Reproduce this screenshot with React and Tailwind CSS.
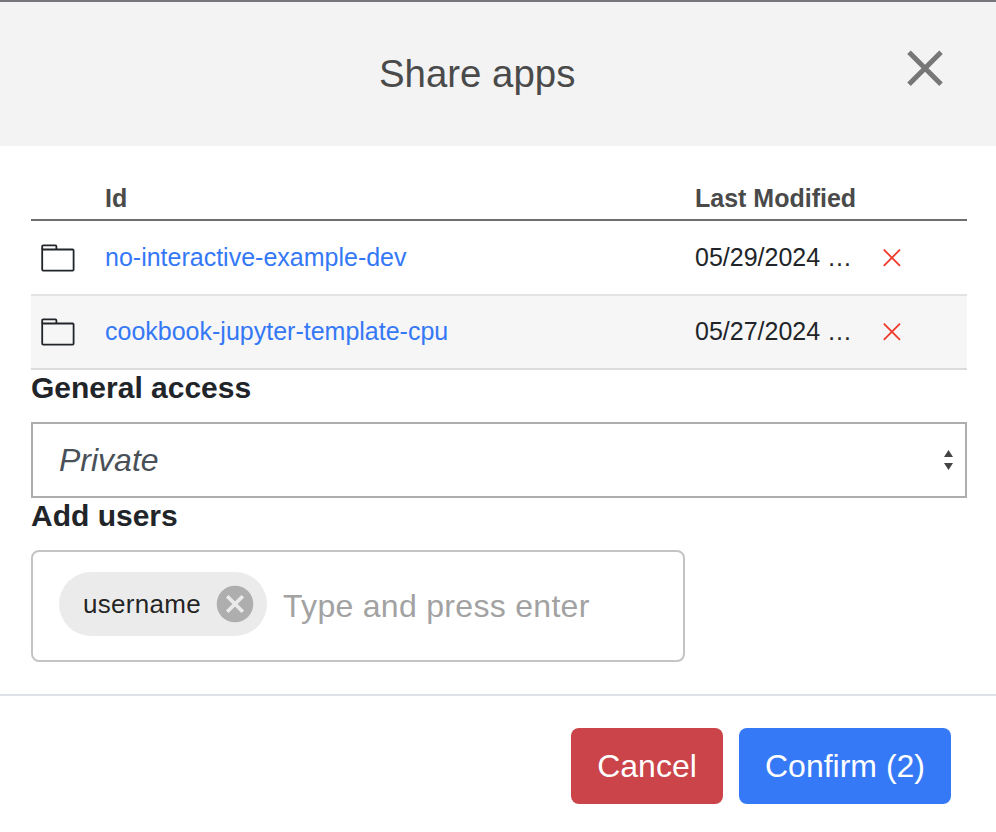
const FolderIcon = () => (
  <svg className="block h-[28px] w-[34px]" viewBox="0 0 34 28" fill="none" stroke="#212529" strokeWidth="1.8">
    <path d="M1.2 5.3V2.4Q1.2 1.4 2.2 1.4H14.4Q15.4 1.4 15.4 2.4V5.4" />
    <path d="M1.2 5.5H31.6Q32.6 5.5 32.6 6.5V25.6Q32.6 26.6 31.6 26.6H2.2Q1.2 26.6 1.2 25.6Z" />
  </svg>
);

const RemoveIcon = () => (
  <svg className="block size-[18px]" viewBox="0 0 18 18" fill="none" stroke="#f03a2b" strokeWidth="1.8">
    <path d="M.8 .6L17 16.8M17 .6L.8 16.8" />
  </svg>
);

const COLUMNS = "grid grid-cols-[74px_590px_188px_1fr] items-center";

const apps = [
  { id: "no-interactive-example-dev", modified: "05/29/2024 …", row: "border-[#e3e3e3] bg-white" },
  { id: "cookbook-jupyter-template-cpu", modified: "05/27/2024 …", row: "border-[#dbdbdb] bg-[#f6f6f6]" },
];

export default function App() {
  return (
    <div className="flex h-[832px] w-[996px] flex-col overflow-hidden bg-white font-['Liberation_Sans',Arial,sans-serif] text-[#212529]">
      <header className="flex h-[146px] shrink-0 justify-between border-t-2 border-[#78767b] bg-[#f3f3f3] pr-[53px] pl-[379px]">
        <h1 className="mt-[48px] text-[38.4px] leading-[48px] text-[#4a4a4a]">Share apps</h1>
        <button aria-label="Close" className="mt-[48px] size-[36px]">
          <svg className="block size-[36px]" viewBox="0 0 36 36" stroke="#777" strokeWidth="5">
            <path d="M2 2.2L34 34.2M34 2.2L2 34.2" />
          </svg>
        </button>
      </header>

      <main className="flex h-[548px] shrink-0 flex-col pt-[32px] pr-[29px] pl-[31px]">
        <div className="flex flex-col text-[25px]">
          <div className={`${COLUMNS} h-[43px] border-b-2 border-[#6f6f6f] font-bold text-[#4a4a4a]`}>
            <span />
            <span>Id</span>
            <span>Last Modified</span>
          </div>
          {apps.map((app) => (
            <div key={app.id} className={`${COLUMNS} h-[75px] border-b-2 last:h-[74px] ${app.row}`}>
              <span className="pl-[10px]">
                <FolderIcon />
              </span>
              <a className="text-[#3478f6]">{app.id}</a>
              <span>{app.modified}</span>
              <button aria-label="Remove" className="justify-self-start">
                <RemoveIcon />
              </button>
            </div>
          ))}
        </div>

        <h2 className="h-[52px] text-[30px] leading-[36px] font-bold">General access</h2>
        <div className="flex h-[76px] items-center justify-between border-2 border-[#adadad] pr-[11px] pl-[26px]">
          <span className="text-[32px] text-[#495057] italic">Private</span>
          <svg className="h-[20px] w-[10px]" viewBox="0 0 10 20" fill="#444">
            <path d="M4.5 0L9 7H0ZM0 13H9L4.5 20Z" />
          </svg>
        </div>

        <h2 className="h-[52px] text-[30px] leading-[36px] font-bold">Add users</h2>
        <div className="flex h-[112px] w-[654px] rounded-lg border-2 border-[#c4c4c4] pt-[20px] pl-[26px]">
          <div className="flex h-[64px] w-[208px] items-center justify-between rounded-full bg-[#ebebeb] pr-[13px] pl-[24px]">
            <span className="text-[26px] tracking-[0.3px] text-[rgba(0,0,0,0.87)]">username</span>
            <svg className="size-[38px]" viewBox="0 0 38 38">
              <circle cx="19" cy="19" r="18.3" fill="#aeaeae" />
              <path d="M11.2 11.2L26.8 26.8M26.8 11.2L11.2 26.8" stroke="#ebebeb" strokeWidth="3.7" />
            </svg>
          </div>
          <span className="mt-[14px] ml-[16px] text-[32px] leading-[40px] tracking-[0.3px] text-[#a2a2a2]">
            Type and press enter
          </span>
        </div>
      </main>

      <footer className="flex flex-1 items-start justify-end gap-4 border-t-2 border-[#dee2e6] pt-[32px] pr-[45px] text-[32px] text-white">
        <button className="h-[76px] w-[152px] rounded-lg bg-[#ca444a]">Cancel</button>
        <button className="h-[76px] w-[212px] rounded-lg bg-[#3579f6]">Confirm (2)</button>
      </footer>
    </div>
  );
}
